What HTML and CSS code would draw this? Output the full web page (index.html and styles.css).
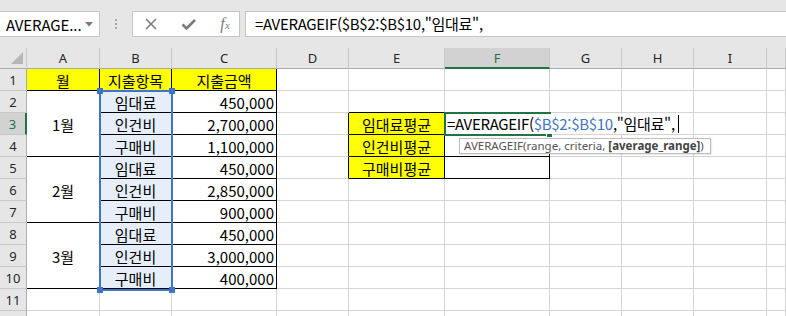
FILE: index.html
```html
<!DOCTYPE html>
<html lang="ko">
<head>
<meta charset="utf-8">
<link rel="stylesheet" href="styles.css">
</head>
<body>
<div class="app">
  <div class="topbar">
    <div class="namebox"><span class="nb-text">AVERAGE...</span><svg class="nb-arrow" width="8" height="5" viewBox="0 0 8 5"><path d="M0 0H8L4 4.5Z" fill="#7a7a7a"/></svg></div>
    <div class="grip"><i></i><i></i><i></i></div>
    <div class="fbtns">
      <svg class="ic" width="14" height="14" viewBox="0 0 14 14"><path d="M2 2L12 12M12 2L2 12" stroke="#7a7a7a" stroke-width="1.5" fill="none"/></svg>
      <svg class="ic" width="16" height="14" viewBox="0 0 16 14"><path d="M1.5 7.5L5.5 11.5L14 3" stroke="#7a7a7a" stroke-width="2.6" fill="none"/></svg>
      <span class="fx">f<sub>x</sub></span>
    </div>
    <div class="finput">=AVERAGEIF($B$2:$B$10,"임대료",</div>
  </div>

  <div class="sheet">
    <!-- header row -->
    <div class="ch corner"><svg width="12" height="12" viewBox="0 0 12 12"><path d="M12 0V12H0Z" fill="#b7b7b7"/></svg></div>
    <div class="ch">A</div><div class="ch">B</div><div class="ch">C</div><div class="ch">D</div><div class="ch">E</div>
    <div class="ch chsel">F</div><div class="ch">G</div><div class="ch">H</div><div class="ch">I</div><div class="ch"></div>

    <!-- row 1 -->
    <div class="rh">1</div>
    <div class="c yl bk-r bk-b ctr">월</div>
    <div class="c yl bk-r bk-b ctr">지출항목</div>
    <div class="c yl bk-r bk-b ctr">지출금액</div>
    <div class="c"></div><div class="c"></div><div class="c"></div><div class="c"></div><div class="c"></div><div class="c"></div><div class="c"></div>

    <!-- row 2 -->
    <div class="rh">2</div>
    <div class="c m3 bk-r bk-b ctr">1월</div>
    <div class="c sel bk-r bk-b ctr">임대료</div>
    <div class="c bk-r bk-b num">450,000</div>
    <div class="c"></div><div class="c bk-b"></div><div class="c bk-b"></div><div class="c"></div><div class="c"></div><div class="c"></div><div class="c"></div>

    <!-- row 3 -->
    <div class="rh rhsel">3</div>
    <div class="c sel bk-r bk-b ctr">인건비</div>
    <div class="c bk-r bk-b num">2,700,000</div>
    <div class="c bk-r"></div>
    <div class="c yl bk-r bk-b ctr">임대료평균</div>
    <div class="c bk-r bk-b"></div><div class="c"></div><div class="c"></div><div class="c"></div><div class="c"></div>

    <!-- row 4 -->
    <div class="rh">4</div>
    <div class="c sel bk-r bk-b ctr">구매비</div>
    <div class="c bk-r bk-b num">1,100,000</div>
    <div class="c bk-r"></div>
    <div class="c yl bk-r bk-b ctr">인건비평균</div>
    <div class="c bk-r bk-b"></div><div class="c"></div><div class="c"></div><div class="c"></div><div class="c"></div>

    <!-- row 5 -->
    <div class="rh">5</div>
    <div class="c m3 bk-r bk-b ctr">2월</div>
    <div class="c sel bk-r bk-b ctr">임대료</div>
    <div class="c bk-r bk-b num">450,000</div>
    <div class="c bk-r"></div>
    <div class="c yl bk-r bk-b ctr">구매비평균</div>
    <div class="c bk-r bk-b"></div><div class="c"></div><div class="c"></div><div class="c"></div><div class="c"></div>

    <!-- row 6 -->
    <div class="rh">6</div>
    <div class="c sel bk-r bk-b ctr">인건비</div>
    <div class="c bk-r bk-b num">2,850,000</div>
    <div class="c"></div><div class="c"></div><div class="c"></div><div class="c"></div><div class="c"></div><div class="c"></div><div class="c"></div>

    <!-- row 7 -->
    <div class="rh">7</div>
    <div class="c sel bk-r bk-b ctr">구매비</div>
    <div class="c bk-r bk-b num">900,000</div>
    <div class="c"></div><div class="c"></div><div class="c"></div><div class="c"></div><div class="c"></div><div class="c"></div><div class="c"></div>

    <!-- row 8 -->
    <div class="rh">8</div>
    <div class="c m3 bk-r bk-b ctr">3월</div>
    <div class="c sel bk-r bk-b ctr">임대료</div>
    <div class="c bk-r bk-b num">450,000</div>
    <div class="c"></div><div class="c"></div><div class="c"></div><div class="c"></div><div class="c"></div><div class="c"></div><div class="c"></div>

    <!-- row 9 -->
    <div class="rh">9</div>
    <div class="c sel bk-r bk-b ctr">인건비</div>
    <div class="c bk-r bk-b num">3,000,000</div>
    <div class="c"></div><div class="c"></div><div class="c"></div><div class="c"></div><div class="c"></div><div class="c"></div><div class="c"></div>

    <!-- row 10 -->
    <div class="rh">10</div>
    <div class="c sel bk-r bk-b ctr">구매비</div>
    <div class="c bk-r bk-b num">400,000</div>
    <div class="c"></div><div class="c"></div><div class="c"></div><div class="c"></div><div class="c"></div><div class="c"></div><div class="c"></div>

    <!-- row 11 -->
    <div class="rh">11</div>
    <div class="c"></div><div class="c"></div><div class="c"></div><div class="c"></div><div class="c"></div><div class="c"></div><div class="c"></div><div class="c"></div><div class="c"></div><div class="c"></div>

    <!-- row 12 (partially visible) -->
    <div class="rh"></div>
    <div class="c"></div><div class="c"></div><div class="c"></div><div class="c"></div><div class="c"></div><div class="c"></div><div class="c"></div><div class="c"></div><div class="c"></div><div class="c"></div>

    <!-- overlays -->
    <div class="refsel">
      <i class="hd tl"></i><i class="hd tr"></i><i class="hd bl"></i><i class="hd br"></i>
    </div>
    <div class="active"><i class="fill"></i></div>
    <div class="editor">=AVERAGEIF(<span class="ref">$B$2:$B$10</span>,"임대료",<i class="caret"></i></div>
    <div class="tip">AVERAGEIF(range, criteria, <b>[average_range]</b>)</div>
  </div>
</div>
</body>
</html>
```
FILE: styles.css
```css
html, body {
  margin: 0;
  padding: 0;
  background: #ffffff;
}
body {
  width: 786px;
  height: 316px;
  overflow: hidden;
  font-family: "Noto Sans CJK KR", "Noto Sans", sans-serif;
}
.app {
  width: 786px;
  height: 316px;
  overflow: hidden;
}

/* ---------- formula bar ---------- */
.topbar {
  height: 48px;
  background: #e6e6e6;
  display: flex;
  align-items: flex-start;
  padding-top: 11px;
  box-sizing: border-box;
  overflow: hidden;
}
.namebox {
  width: 100px;
  height: 26px;
  box-sizing: border-box;
  background: #fff;
  border: 1px solid #c6c6c6;
  border-left: none;
  display: flex;
  align-items: center;
  padding-left: 6px;
  font-size: 15px;
  color: #000;
  flex: none;
}
.nb-text {
  flex: 1;
  white-space: nowrap;
  line-height: 1;
  letter-spacing: -0.1px;
}
.nb-arrow {
  margin-right: 6px;
}
.grip {
  width: 32px;
  height: 26px;
  flex: none;
  display: flex;
  flex-direction: column;
  align-items: center;
  justify-content: center;
  gap: 2px;
}
.grip i {
  width: 2px;
  height: 2px;
  background: #a6a6a6;
  display: block;
}
.fbtns {
  width: 108px;
  height: 26px;
  box-sizing: border-box;
  background: #fff;
  border: 1px solid #c6c6c6;
  display: flex;
  align-items: center;
  justify-content: space-between;
  padding: 0 9px 0 11px;
  flex: none;
}
.fx {
  font-family: "Liberation Serif", serif;
  font-style: italic;
  font-size: 16px;
  color: #7a7a7a;
  line-height: 1;
}
.fx sub {
  font-size: 11px;
  vertical-align: baseline;
  margin-left: 0.5px;
}
.finput {
  margin-left: 5px;
  flex: 1;
  min-width: 560px;
  height: 26px;
  box-sizing: border-box;
  background: #fff;
  border: 1px solid #c6c6c6;
  border-right: none;
  padding-left: 9px;
  font-size: 15px;
  line-height: 24px;
  letter-spacing: -0.3px;
  color: #000;
  white-space: nowrap;
}

/* ---------- sheet ---------- */
.sheet {
  position: relative;
  display: grid;
  grid-template-columns: 27px 73px 72px 105px 72px 96px 105px 72px 72px 73px 1fr;
  grid-template-rows: 21px repeat(12, 22px);
  font-size: 15px;
  color: #000;
}
.ch, .rh {
  background: #e6e6e6;
  box-sizing: border-box;
  border-right: 1px solid #c8c8c8;
  border-bottom: 1px solid #ababab;
  display: flex;
  align-items: center;
  justify-content: center;
  font-family: "Noto Sans", sans-serif;
  font-size: 13px;
  color: #262626;
}
.rh {
  border-bottom: 1px solid #c8c8c8;
  border-right: 1px solid #ababab;
}
.corner {
  justify-content: flex-end;
  align-items: flex-end;
  padding: 0 3px 4px 0;
}
.chsel {
  background: #d2d2d2;
  color: #217346;
  border-bottom: 2px solid #217346;
}
.rhsel {
  background: #d2d2d2;
  color: #217346;
  border-right: 2px solid #217346;
}
.c {
  box-sizing: border-box;
  border-right: 1px solid #d4d4d4;
  border-bottom: 1px solid #d4d4d4;
  display: flex;
  align-items: center;
  white-space: nowrap;
  line-height: 1;
  padding-top: 1px;
}
.m3 { grid-row: span 3; }
.ctr { justify-content: center; }
.num { justify-content: flex-end; padding-right: 2px; }
.yl { background: #ffff00; }
.sel { background: #e6eef9; }
.bk-r { border-right-color: #000; }
.bk-b { border-bottom-color: #000; }

/* reference range highlight B2:B10 */
.refsel {
  position: absolute;
  left: 99px;
  top: 42px;
  width: 74px;
  height: 201px;
  box-sizing: border-box;
  border: 2px solid #3f74cc;
  pointer-events: none;
}
.hd {
  position: absolute;
  width: 6px;
  height: 6px;
  background: #3f74cc;
  display: block;
}
.hd.tl { left: -4px; top: -4px; }
.hd.tr { right: -4px; top: -4px; }
.hd.bl { left: -4px; bottom: -4px; }
.hd.br { right: -4px; bottom: -4px; }

/* active cell F3 */
.active {
  position: absolute;
  left: 444px;
  top: 64px;
  width: 107px;
  height: 24px;
  box-sizing: border-box;
  border: 2px solid #217346;
}
.fill {
  position: absolute;
  right: -4px;
  bottom: -4px;
  width: 5px;
  height: 5px;
  background: #217346;
  border: 1px solid #fff;
  display: block;
}
.editor {
  position: absolute;
  left: 446px;
  top: 66px;
  width: 240px;
  height: 20px;
  background: #fff;
  padding-left: 1px;
  box-sizing: border-box;
  font-size: 15px;
  line-height: 20px;
  letter-spacing: -0.3px;
  white-space: nowrap;
  color: #000;
  display: flex;
  align-items: center;
}
.ref { color: #3f74cc; }
.caret {
  display: block;
  flex: none;
  width: 1px;
  height: 18px;
  background: #000;
  margin-left: 3px;
}

/* tooltip */
.tip {
  position: absolute;
  left: 459px;
  top: 90px;
  width: 252px;
  height: 16px;
  box-sizing: border-box;
  background: #fff;
  border: 1px solid #bdbdbd;
  box-shadow: 1px 1px 1px rgba(0,0,0,0.08);
  font-family: "Noto Sans", sans-serif;
  font-size: 11.5px;
  line-height: 14px;
  color: #555;
  padding-left: 4px;
  white-space: nowrap;
  overflow: hidden;
}
.tip b {
  font-weight: 700;
  color: #444;
}
```
